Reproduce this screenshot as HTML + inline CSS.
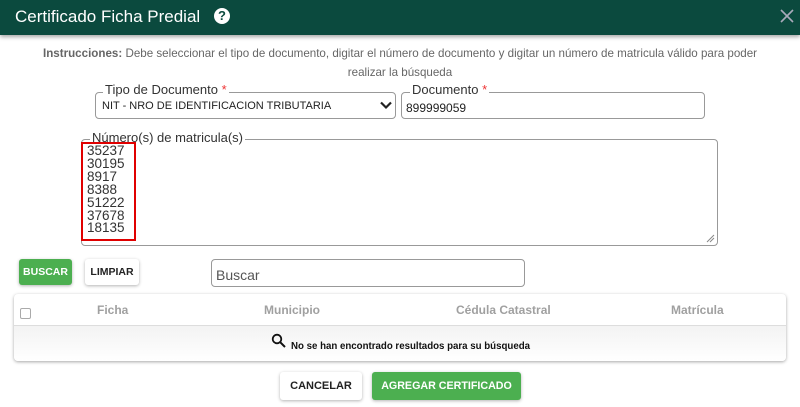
<!DOCTYPE html>
<html><head><meta charset="utf-8"><style>
*{box-sizing:border-box;margin:0;padding:0}
body{width:800px;height:407px;background:#fff;font-family:"Liberation Sans",sans-serif;position:relative;overflow:hidden}
.a{position:absolute}
.hdr{left:0;top:0;width:800px;height:35px;background:#0b4a3e;box-shadow:0 2px 4px rgba(0,0,0,.35)}
.box{border:1px solid #999;border-radius:4px}
.lbl{font-size:13px;color:#333;background:#fff;padding:0 2px;line-height:13px}
.btn{font-size:10.5px;font-weight:bold;display:flex;align-items:center;justify-content:center;border-radius:3px;box-shadow:0 1px 3px rgba(0,0,0,.3)}
.th{font-size:12px;font-weight:bold;color:#a0a0a0;top:303px}
</style></head><body>
<div class="a hdr"></div>
<div class="a" style="left:15px;top:7px;color:#fff;font-size:17px">Certificado Ficha Predial</div>
<div class="a" style="left:214px;top:8px;width:16px;height:16px;border-radius:50%;background:#fff;color:#0b4a3e;font-size:13px;font-weight:bold;text-align:center;line-height:16px">?</div>
<svg class="a" style="left:780px;top:9px" width="14" height="14"><path d="M1 1L13 13M13 1L1 13" stroke="#aab" stroke-width="1.6"/></svg>
<div class="a" style="left:0;width:800px;top:44px;text-align:center;font-size:11.6px;color:#666;line-height:19px;padding:0 40px"><b>Instrucciones:</b> Debe seleccionar el tipo de documento, digitar el número de documento y digitar un número de matricula válido para poder realizar la búsqueda</div>
<div class="a box" style="left:95px;top:92px;width:301px;height:27px"></div>
<div class="a lbl" style="left:103px;top:83px">Tipo de Documento <span style="color:#e33">*</span></div>
<div class="a" style="left:102px;top:100px;font-size:11px;color:#222">NIT - NRO DE IDENTIFICACION TRIBUTARIA</div>
<svg class="a" style="left:380px;top:101px" width="12" height="9"><path d="M1 1.5L6 6.5L11 1.5" stroke="#222" stroke-width="2.2" fill="none"/></svg>
<div class="a box" style="left:401px;top:92px;width:304px;height:27px"></div>
<div class="a lbl" style="left:410px;top:83px">Documento <span style="color:#e33">*</span></div>
<div class="a" style="left:406px;top:101px;font-size:12px;color:#222">899999059</div>
<div class="a box" style="left:81px;top:139px;width:637px;height:107px"></div>
<div class="a lbl" style="left:90px;top:131px">Número(s) de matricula(s)</div>
<div class="a" style="left:81px;top:142px;width:55px;height:99px;border:2px solid #e00000"></div>
<div class="a" style="left:87px;top:145px;font-size:13.5px;line-height:12.9px;color:#333">35237<br>30195<br>8917<br>8388<br>51222<br>37678<br>18135</div>
<svg class="a" style="left:706px;top:234px" width="9" height="9"><path d="M8 1L1 8M8 4L4 8" stroke="#888"/></svg>
<div class="a btn" style="left:19px;top:259px;width:53px;height:26px;background:#4caf50;color:#fff">BUSCAR</div>
<div class="a btn" style="left:85px;top:259px;width:54px;height:26px;background:#fff;color:#222">LIMPIAR</div>
<div class="a box" style="left:211px;top:259px;width:314px;height:28px"></div>
<div class="a" style="left:216px;top:267px;font-size:14px;color:#555">Buscar</div>
<div class="a" style="left:14px;top:294px;width:772px;height:67px;border-radius:4px;box-shadow:0 1px 3px rgba(0,0,0,.35);background:#fff"></div>
<div class="a" style="left:14px;top:325px;width:772px;height:36px;background:linear-gradient(#f3f3f3,#fff);border-top:1px solid #ddd;border-radius:0 0 4px 4px"></div>
<div class="a" style="left:20px;top:308px;width:11px;height:11px;border:1px solid #aaa;border-radius:2px"></div>
<div class="a th" style="left:97px">Ficha</div>
<div class="a th" style="left:264px">Municipio</div>
<div class="a th" style="left:456px">Cédula Catastral</div>
<div class="a th" style="left:671px">Matrícula</div>
<svg class="a" style="left:271px;top:333px" width="16" height="16"><circle cx="6" cy="6" r="4.3" stroke="#111" stroke-width="1.8" fill="none"/><path d="M9.2 9.2L14 14" stroke="#111" stroke-width="2"/></svg>
<div class="a" style="left:291px;top:341px;font-size:9.7px;font-weight:bold;color:#111">No se han encontrado resultados para su búsqueda</div>
<div class="a btn" style="left:280px;top:372px;width:82px;height:28px;background:#fff;color:#222;font-size:11px">CANCELAR</div>
<div class="a btn" style="left:372px;top:372px;width:149px;height:28px;background:#4caf50;color:#fff;font-size:10.7px">AGREGAR CERTIFICADO</div>
</body></html>
